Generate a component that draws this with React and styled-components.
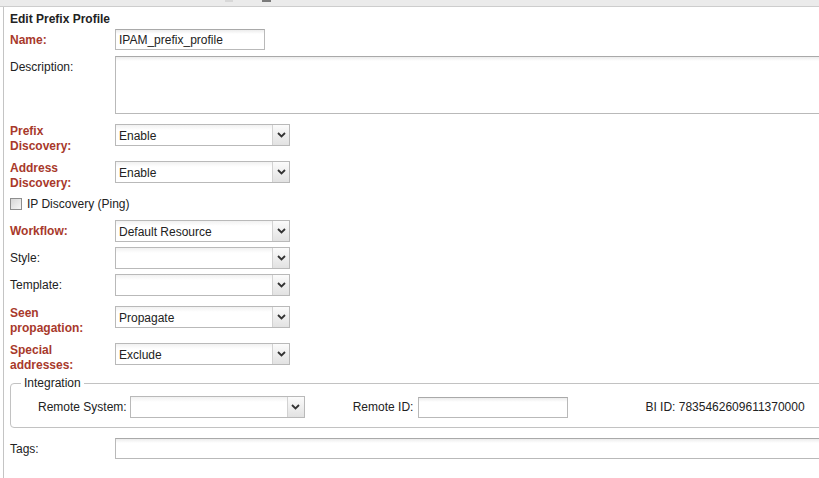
import React from 'react';
import styled, { createGlobalStyle } from 'styled-components';

const GlobalStyle = createGlobalStyle`
  html, body {
    margin: 0;
    padding: 0;
    background: #fff;
    overflow: hidden;
  }
  body {
    font-family: "Liberation Sans", Arial, sans-serif;
    font-size: 12px;
    color: #222;
  }
`;

const TopStrip = styled.div`
  height: 6px;
  background: #ebebeb;
  border-bottom: 1px solid #cdcdcd;
  display: flex;
  align-items: flex-start;
`;

const TabMark = styled.span`
  display: block;
  margin-left: ${p => p.$left}px;
  width: ${p => p.$w}px;
  height: 2px;
  background: ${p => p.$color};
`;

const Panel = styled.div`
  margin-left: 3px;
  border-left: 1px solid #c4c4c4;
  padding: 5px 0 20px 6px;
  height: 471px;
  box-sizing: border-box;
  overflow: hidden;
`;

const Title = styled.div`
  font-weight: bold;
  line-height: 14px;
  margin-bottom: 3px;
`;

const Row = styled.div`
  display: flex;
  align-items: flex-start;
  margin-top: ${p => p.$mt || 0}px;
`;

const Label = styled.label`
  width: 105px;
  flex: none;
  line-height: 15px;
  padding-top: ${p => (p.$multi ? 0 : 4)}px;
  font-weight: ${p => (p.$req ? 'bold' : 'normal')};
  color: ${p => (p.$req ? '#a8392b' : '#222')};
`;

const TextInput = styled.div`
  box-sizing: border-box;
  flex: none;
  width: ${p => p.$w}px;
  height: ${p => p.$h || 21}px;
  border: 1px solid #b9b9b9;
  border-top-color: #a9a9a9;
  background: linear-gradient(#ececec 0, #fff 4px);
  padding: 3px 3px;
  line-height: 14px;
  color: #222;
  white-space: nowrap;
`;

const SelectBox = styled.div`
  box-sizing: border-box;
  flex: none;
  width: 175px;
  height: 22px;
  border: 1px solid #b9b9b9;
  background: linear-gradient(#f1f1f1 0, #fff 5px);
  display: flex;
  align-items: stretch;
`;

const SelectValue = styled.span`
  flex: 1;
  padding: 4px 3px 0;
  line-height: 14px;
  color: #222;
`;

const ArrowButton = styled.span`
  width: 16px;
  border-left: 1px solid #d2d2d2;
  background: linear-gradient(#fbfbfb, #e2e2e2);
  display: flex;
  align-items: center;
  justify-content: center;
`;

const CheckRow = styled.div`
  display: flex;
  align-items: center;
  gap: 5px;
  margin-top: ${p => p.$mt}px;
  height: 16px;
`;

const CheckBox = styled.span`
  box-sizing: border-box;
  width: 12px;
  height: 12px;
  border: 1px solid #8e8e8e;
  background: linear-gradient(135deg, #d6d6d6, #f7f7f7);
`;

const Fieldset = styled.fieldset`
  margin: 3px 0 0 0;
  padding: 0 10px 9px;
  width: 880px;
  border: 1px solid #c2c2c2;
  border-radius: 4px;
`;

const Legend = styled.legend`
  padding: 0 3px;
  line-height: 14px;
  color: #222;
`;

const IntegrationRow = styled.div`
  display: flex;
  align-items: center;
  padding-left: 17px;
  margin-top: 6px;
`;

const InlineLabel = styled.span`
  margin-left: ${p => p.$ml || 0}px;
  margin-right: ${p => p.$mr ?? 5}px;
  white-space: nowrap;
`;

const Chevron = () => (
  <svg width="9" height="6" viewBox="0 0 9 6">
    <path d="M1 1 L4.5 4.5 L8 1" fill="none" stroke="#333" strokeWidth="1.8" />
  </svg>
);

const Select = ({ value }) => (
  <SelectBox>
    <SelectValue>{value}</SelectValue>
    <ArrowButton><Chevron /></ArrowButton>
  </SelectBox>
);

export default function App() {
  return (
    <>
      <GlobalStyle />
      <TopStrip>
        <TabMark $left={225} $w={8} $color="#d8d8d8" />
        <TabMark $left={29} $w={9} $color="#7a7a7a" />
      </TopStrip>
      <Panel>
        <Title>Edit Prefix Profile</Title>
        <Row>
          <Label $req>Name:</Label>
          <TextInput $w={150}>IPAM_prefix_profile</TextInput>
        </Row>
        <Row $mt={6}>
          <Label>Description:</Label>
          <TextInput $w={760} $h={58} />
        </Row>
        <Row $mt={10}>
          <Label $req $multi>Prefix<br />Discovery:</Label>
          <Select value="Enable" />
        </Row>
        <Row $mt={7}>
          <Label $req $multi>Address<br />Discovery:</Label>
          <Select value="Enable" />
        </Row>
        <CheckRow $mt={5}>
          <CheckBox />
          <span>IP Discovery (Ping)</span>
        </CheckRow>
        <Row $mt={8}>
          <Label $req>Workflow:</Label>
          <Select value="Default Resource" />
        </Row>
        <Row $mt={5}>
          <Label>Style:</Label>
          <Select value="" />
        </Row>
        <Row $mt={5}>
          <Label>Template:</Label>
          <Select value="" />
        </Row>
        <Row $mt={10}>
          <Label $req $multi>Seen<br />propagation:</Label>
          <Select value="Propagate" />
        </Row>
        <Row $mt={7}>
          <Label $req $multi>Special<br />addresses:</Label>
          <Select value="Exclude" />
        </Row>
        <Fieldset>
          <Legend>Integration</Legend>
          <IntegrationRow>
            <InlineLabel $mr={3}>Remote System:</InlineLabel>
            <Select value="" />
            <InlineLabel $ml={48} $mr={5}>Remote ID:</InlineLabel>
            <TextInput $w={150} />
            <InlineLabel $ml={77}>BI ID: 7835462609611370000</InlineLabel>
          </IntegrationRow>
        </Fieldset>
        <Row $mt={10}>
          <Label>Tags:</Label>
          <TextInput $w={760} />
        </Row>
      </Panel>
    </>
  );
}
